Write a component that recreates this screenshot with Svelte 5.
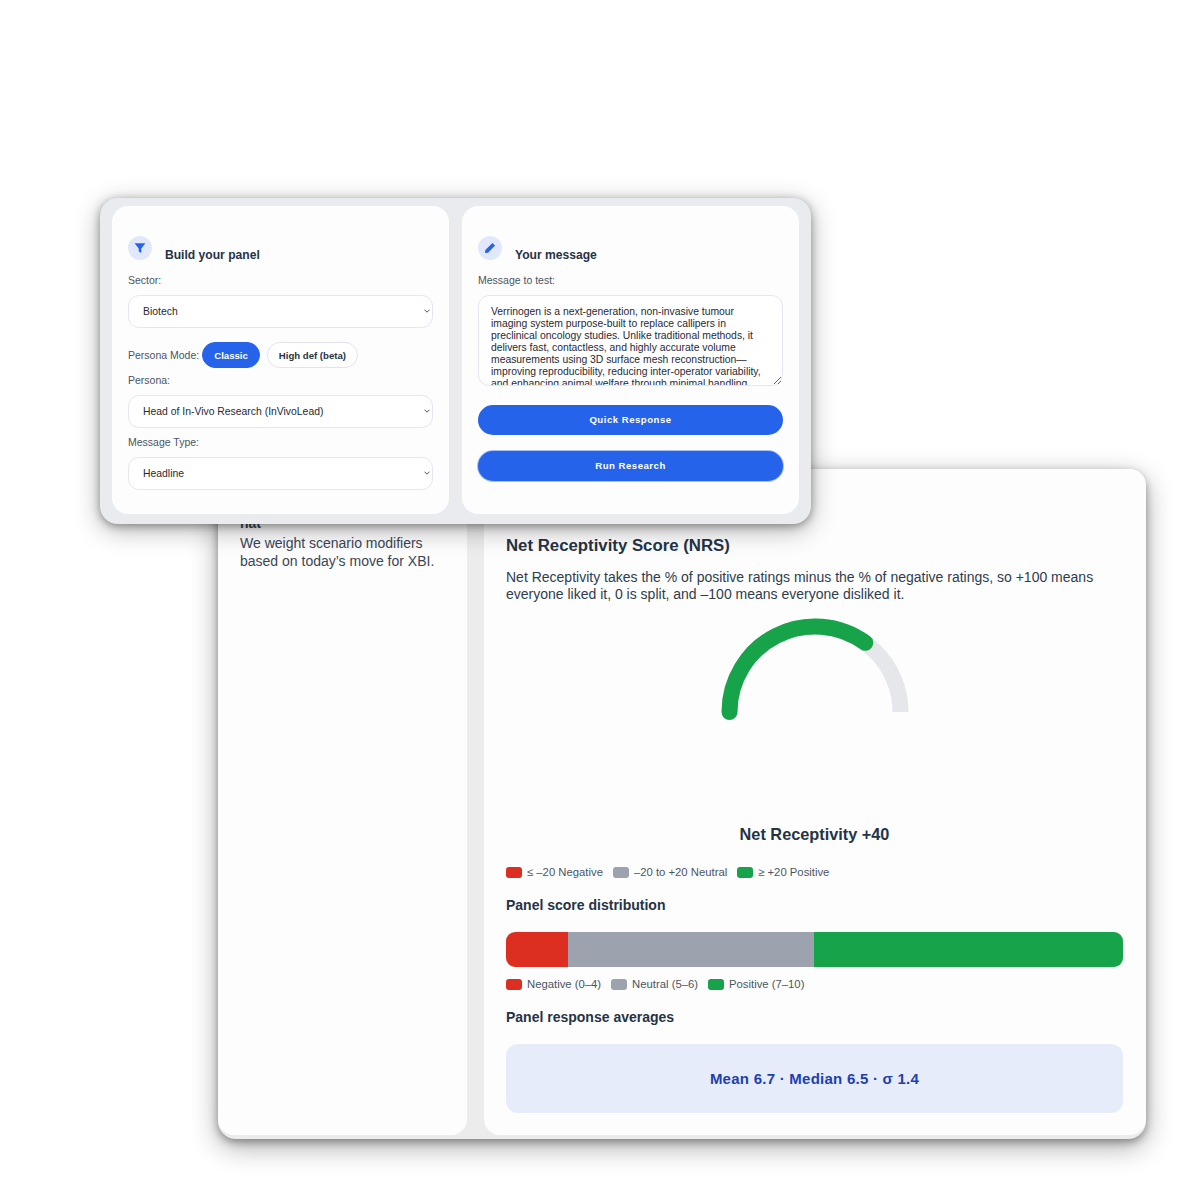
<script>
  const score = 40;
  const cx = 95, cy = 94, r = 85.5;

  // score runs -100..100 over the half circle, left to right
  const angle = Math.PI * (1 - (score + 100) / 200);
  const endX = cx + r * Math.cos(angle);
  const endY = cy - r * Math.sin(angle);

  const message = "Verrinogen is a next-generation, non-invasive tumour imaging system purpose-built to replace callipers in preclinical oncology studies. Unlike traditional methods, it delivers fast, contactless, and highly accurate volume measurements using 3D surface mesh reconstruction\u2014improving reproducibility, reducing inter-operator variability, and enhancing animal welfare through minimal handling.";

  const nrsLegend = [
    { label: "\u2264 \u201320 Negative", color: "#dc2f22" },
    { label: "\u201320 to +20 Neutral", color: "#9ca3af" },
    { label: "\u2265 +20 Positive", color: "#16a34a" }
  ];
  const scoreLegend = [
    { label: "Negative (0\u20134)", color: "#dc2f22" },
    { label: "Neutral (5\u20136)", color: "#9ca3af" },
    { label: "Positive (7\u201310)", color: "#16a34a" }
  ];
  const segments = [
    { pct: 10, color: "#dc2f22" },
    { pct: 40, color: "#9ca3af" },
    { pct: 50, color: "#16a34a" }
  ];
</script>

<div class="desktop">
  <section class="window back">
    <aside class="panel side">
      <div class="side-title">nat</div>
      <p>We weight scenario modifiers based on today’s move for XBI.</p>
    </aside>

    <main class="panel results">
      <h2>Net Receptivity Score (NRS)</h2>
      <p class="intro">Net Receptivity takes the % of positive ratings minus the % of negative ratings, so +100 means everyone liked it, 0 is split, and –100 means everyone disliked it.</p>

      <div class="gauge">
        <svg width="190" height="110" viewBox="0 0 190 110">
          <path d="M {cx - r} {cy} A {r} {r} 0 0 1 {cx + r} {cy}" fill="none" stroke="#e5e7eb" stroke-width="16" />
          <path d="M {cx - r} {cy} A {r} {r} 0 0 1 {endX} {endY}" fill="none" stroke="#16a34a" stroke-width="16" stroke-linecap="round" />
        </svg>
      </div>

      <div class="nrs-value">Net Receptivity +40</div>

      <div class="legend nrs-legend">
        {#each nrsLegend as item}
          <span class="legend-item"><i style="background:{item.color}"></i>{item.label}</span>
        {/each}
      </div>

      <h3>Panel score distribution</h3>
      <div class="bar">
        {#each segments as seg}
          <div style="width:{seg.pct}%;background:{seg.color}"></div>
        {/each}
      </div>
      <div class="legend score-legend">
        {#each scoreLegend as item}
          <span class="legend-item"><i style="background:{item.color}"></i>{item.label}</span>
        {/each}
      </div>

      <h3 class="averages-title">Panel response averages</h3>
      <div class="averages">Mean 6.7 · Median 6.5 · σ 1.4</div>
    </main>
  </section>

  <section class="window front">
    <div class="panel form">
      <div class="head">
        <span class="badge">
          <svg width="12" height="12" viewBox="0 0 12 12"><path d="M0.6 1.2 H11.4 L7.3 6.4 V11 L4.7 9.4 V6.4 Z" fill="#2563eb" /></svg>
        </span>
        <span class="head-title">Build your panel</span>
      </div>

      <label for="sector">Sector:</label>
      <div class="select-wrap">
        <select id="sector"><option>Biotech</option></select>
        <svg class="chev" width="6" height="4" viewBox="0 0 6 4"><path d="M0.5 0.7 L3 3.2 L5.5 0.7" fill="none" stroke="#555" stroke-width="1" /></svg>
      </div>

      <div class="mode">
        <span class="mode-label">Persona Mode:</span>
        <button class="pill active">Classic</button>
        <button class="pill">High def (beta)</button>
      </div>

      <label for="persona" class="persona-label">Persona:</label>
      <div class="select-wrap">
        <select id="persona"><option>Head of In-Vivo Research (InVivoLead)</option></select>
        <svg class="chev" width="6" height="4" viewBox="0 0 6 4"><path d="M0.5 0.7 L3 3.2 L5.5 0.7" fill="none" stroke="#555" stroke-width="1" /></svg>
      </div>

      <label for="type" class="type-label">Message Type:</label>
      <div class="select-wrap">
        <select id="type"><option>Headline</option></select>
        <svg class="chev" width="6" height="4" viewBox="0 0 6 4"><path d="M0.5 0.7 L3 3.2 L5.5 0.7" fill="none" stroke="#555" stroke-width="1" /></svg>
      </div>
    </div>

    <div class="panel form">
      <div class="head">
        <span class="badge">
          <svg width="12" height="12" viewBox="0 0 12 12"><path d="M8.4 0.9 L11.1 3.6 L4 10.7 L1 11 L1.3 8 Z" fill="#2563eb" /></svg>
        </span>
        <span class="head-title">Your message</span>
      </div>

      <label for="msg">Message to test:</label>
      <textarea id="msg" value={message}></textarea>

      <button class="action first">Quick Response</button>
      <button class="action second">Run Research</button>
    </div>
  </section>
</div>

<style>
  :global(body) {
    margin: 0;
    background: #fff;
  }

  .desktop {
    position: relative;
    width: 1200px;
    height: 1200px;
    overflow: hidden;
    font-family: "Liberation Sans", Arial, sans-serif;
    color: #253346;
  }

  .window {
    position: absolute;
    display: flex;
    box-sizing: border-box;
    border-radius: 18px;
  }

  .back {
    left: 218px;
    top: 469px;
    width: 928px;
    height: 670px;
    gap: 17px;
    padding-bottom: 4px;
    background: #ececec;
    box-shadow: 0 3px 8px rgba(0, 0, 0, 0.35), 0 8px 28px rgba(0, 0, 0, 0.32);
  }

  .front {
    left: 100px;
    top: 198px;
    width: 711px;
    height: 326px;
    gap: 13px;
    padding: 8px 12px 10px;
    background: #e9ebef;
    box-shadow: 0 2px 8px rgba(0, 0, 0, 0.35), 0 6px 26px rgba(0, 0, 0, 0.3);
  }

  .panel {
    box-sizing: border-box;
    background: #fdfdfd;
    border-radius: 16px;
  }

  .side {
    width: 249px;
    padding: 45px 22px 0 22px;
    font-size: 14px;
    line-height: 18.5px;
    color: #3a4656;
  }

  .side-title {
    font-weight: 700;
    height: 19.5px;
  }

  .side p {
    margin: 0;
  }

  .results {
    flex: 1;
    padding: 67px 23px 0 22px;
  }

  h2 {
    margin: 0;
    font-size: 16.8px;
    line-height: 19px;
    font-weight: 700;
  }

  .intro {
    margin: 14px 0 0;
    font-size: 14px;
    line-height: 16.5px;
    color: #2f3c4d;
  }

  .gauge {
    display: flex;
    justify-content: center;
    margin-top: 16px;
    height: 206px;
  }

  .nrs-value {
    text-align: center;
    font-size: 16.3px;
    line-height: 20px;
    font-weight: 700;
  }

  .legend {
    display: flex;
    font-size: 11.3px;
    line-height: 13px;
    color: #4b5563;
  }

  .nrs-legend {
    gap: 10px;
    margin-top: 22px;
  }

  .score-legend {
    gap: 10px;
    margin-top: 11px;
  }

  .legend-item {
    display: flex;
    align-items: center;
    gap: 5px;
  }

  .legend-item i {
    display: block;
    width: 16px;
    height: 11px;
    border-radius: 3px;
  }

  h3 {
    margin: 18px 0 0;
    font-size: 14px;
    line-height: 17px;
    font-weight: 700;
  }

  .bar {
    display: flex;
    height: 35px;
    margin-top: 18px;
    border-radius: 9px;
    overflow: hidden;
  }

  .averages-title {
    margin-top: 18px;
  }

  .averages {
    display: flex;
    align-items: center;
    justify-content: center;
    height: 69px;
    margin-top: 18px;
    border-radius: 12px;
    background: #e6ecfa;
    color: #1e40af;
    font-size: 15px;
    font-weight: 700;
    letter-spacing: 0.25px;
  }

  .form {
    display: flex;
    flex-direction: column;
    width: 337px;
    padding: 30px 16px 0;
  }

  .head {
    position: relative;
    height: 24px;
    display: flex;
  }

  .badge {
    display: flex;
    align-items: center;
    justify-content: center;
    width: 24px;
    height: 24px;
    border-radius: 50%;
    background: #e1e8fb;
  }

  .head-title {
    margin: 10px 0 0 13px;
    font-size: 12.1px;
    line-height: 18px;
    font-weight: 700;
  }

  label, .mode-label {
    font-size: 10.5px;
    line-height: 14px;
    color: #4b5563;
  }

  label {
    margin-top: 13px;
  }

  .persona-label {
    margin-top: 5px;
  }

  .type-label {
    margin-top: 7px;
  }

  .select-wrap {
    position: relative;
    margin-top: 8px;
  }

  select {
    display: block;
    box-sizing: border-box;
    width: 100%;
    height: 33px;
    padding: 0 14px;
    appearance: none;
    border: 1px solid #e4e7f1;
    border-radius: 11px;
    background: #fff;
    font-family: inherit;
    font-size: 10.4px;
    color: #1f2937;
  }

  .chev {
    position: absolute;
    right: 3px;
    top: 14px;
  }

  .mode {
    display: flex;
    align-items: center;
    height: 26px;
    margin-top: 14px;
  }

  .mode-label {
    margin-right: 3px;
  }

  .pill {
    box-sizing: border-box;
    height: 26px;
    padding: 0 11px;
    margin-right: 7px;
    border: 1px solid #e2e5ef;
    border-radius: 13px;
    background: #fff;
    font-family: inherit;
    font-size: 9.6px;
    font-weight: 700;
    color: #253346;
  }

  .pill.active {
    background: #2563eb;
    border-color: #2563eb;
    color: #fff;
  }

  textarea {
    display: block;
    box-sizing: border-box;
    width: 100%;
    height: 91px;
    margin-top: 8px;
    padding: 9.5px 12px 0;
    border: 1px solid #e4e7f1;
    border-radius: 11px;
    background: #fff;
    overflow: hidden;
    font-family: inherit;
    font-size: 10.37px;
    line-height: 12px;
    color: #1f2937;
  }

  .action {
    box-sizing: border-box;
    width: 100%;
    height: 30px;
    padding: 0 0 2px;
    border: 0;
    border-radius: 15px;
    background: #2563eb;
    color: #fff;
    font-family: inherit;
    font-size: 9.6px;
    font-weight: 700;
    letter-spacing: 0.5px;
  }

  .first {
    margin-top: 19px;
  }

  .second {
    margin-top: 16px;
    box-shadow: 0 0 0 1px #a9c0f5;
  }
</style>
